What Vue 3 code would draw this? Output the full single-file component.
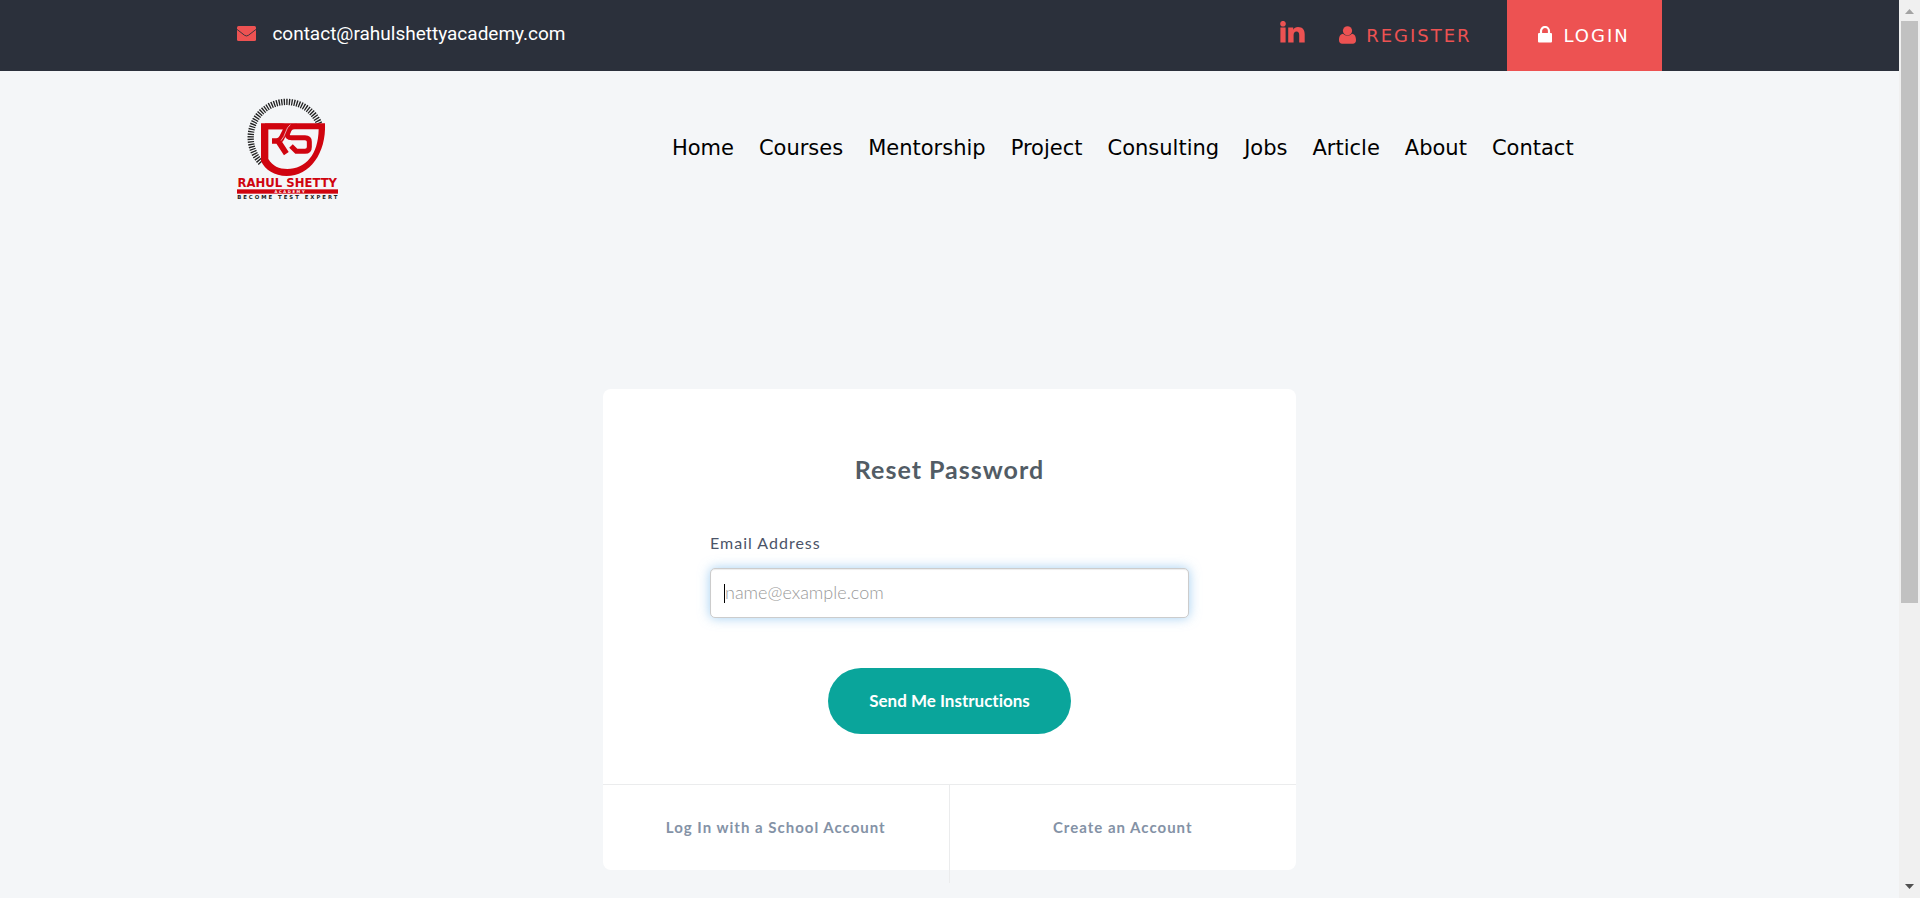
<script setup>
import { ref } from 'vue'

const email = ref('')
const links = ['Home', 'Courses', 'Mentorship', 'Project', 'Consulting', 'Jobs', 'Article', 'About', 'Contact']
</script>

<template>
  <div class="window">
    <div class="page">
      <header class="topbar">
        <a class="contact" href="#">
          <svg class="mail" viewBox="0 0 19 15" aria-hidden="true">
            <rect x="0" y="0" width="19" height="15" rx="1.5" fill="#ed5252" />
            <path d="M0 3.4 L7.6 9.3 Q9.5 10.6 11.4 9.3 L19 3.4" fill="none" stroke="#2b303b" stroke-width="0.9" />
          </svg>
          <span>contact@rahulshettyacademy.com</span>
        </a>
        <div class="account">
          <a class="linkedin" href="#" aria-label="LinkedIn">
            <svg viewBox="0 0 25 22" aria-hidden="true">
              <g fill="#ed5252">
                <circle cx="3" cy="2.7" r="2.8" />
                <path d="M.4 6.500h5.200v15h-5.200zM8.200 6.500h5v2.200c1-1.700 2.500-2.600 4.800-2.600 4.500 0 6.700 2.800 6.700 7.200v8.200h-5.500v-7.500c0-2.200-.8-3.400-2.600-3.400-2 0-3 1.400-3 3.400v7.500h-5.400z" />
              </g>
            </svg>
          </a>
          <a class="register" href="#">
            <svg class="user" viewBox="0 0 17 18" aria-hidden="true">
              <g fill="#ed5252">
                <circle cx="8.500" cy="4.800" r="4.600" />
                <path d="M4 7.700C1.200 8 0 10.700 0 14.300 0 16.500 1.300 17.800 3.200 17.800h10.600c1.900 0 3.200-1.300 3.200-3.500 0-3.600-1.200-6.300-4-6.600-2.500 2.600-6.500 2.600-9 0z" />
              </g>
            </svg>
            <span>REGISTER</span>
          </a>
          <a class="login" href="#">
            <svg class="lock" viewBox="0 0 14 17" aria-hidden="true">
              <rect x="0" y="7" width="14" height="9.500" rx="1" fill="#fff" />
              <path d="M3 8V5a4 4 0 0 1 8 0v3" fill="none" stroke="#fff" stroke-width="2.200" />
            </svg>
            <span>LOGIN</span>
          </a>
        </div>
      </header>

      <div class="masthead">
        <a class="logo" href="#" aria-label="Rahul Shetty Academy">
          <svg viewBox="36 24 303 306" aria-hidden="true">
            <path d="M108 218A107 107 0 1 1 283 102" fill="none" stroke="#222" stroke-width="19" stroke-dasharray="4 3.600" />
            <path fill-rule="evenodd" fill="#d0040f" d="M108 100H300C304 190 255 258 185 258 148 258 121 240 108 214ZM130 118V207C143 228 162 237 187 237 242 237 280 194 281 118Z" />
            <path d="M120 109H170Q190 109 180 124L170 144Q165 153 154 153H141M160 154L184 191" fill="none" stroke="#d0040f" stroke-width="17" />
            <path d="M215 109Q198 109 192 120L188 130Q184 143 200 143H240Q253 143 253 155V171Q253 184 240 184H214L198 168" fill="none" stroke="#d0040f" stroke-width="15" />
            <path d="M196 104Q186 112 182 126T168 152" fill="none" stroke="#f4f6f8" stroke-width="2" />
            <text x="187" y="292" text-anchor="middle" class="logo-name">RAHUL SHETTY</text>
            <rect x="36" y="298" width="303" height="13" fill="#d0040f" />
            <text x="196" y="309" text-anchor="middle" class="logo-sub">ACADEMY</text>
            <text x="190" y="326" text-anchor="middle" class="logo-tag">BECOME TEST EXPERT</text>
          </svg>
        </a>
        <nav class="nav" aria-label="Main">
          <a v-for="link in links" :key="link" href="#">{{ link }}</a>
        </nav>
      </div>

      <main class="card">
        <form class="form" @submit.prevent>
          <h1>Reset Password</h1>
          <label for="email">Email Address</label>
          <div class="field">
            <input id="email" v-model="email" type="email" placeholder="name@example.com" />
            <span class="caret" aria-hidden="true"></span>
          </div>
          <button type="submit">Send Me Instructions</button>
        </form>
        <div class="options">
          <a href="#">Log In with a School Account</a>
          <a href="#">Create an Account</a>
        </div>
      </main>
    </div>

    <div class="scrollbar" aria-hidden="true">
      <svg viewBox="0 0 9 5"><path d="M0 5 4.500 0 9 5z" fill="#a3a3a3" /></svg>
      <div class="track"><div class="thumb"></div></div>
      <svg viewBox="0 0 9 5"><path d="M0 0 4.500 5 9 0z" fill="#505050" /></svg>
    </div>
  </div>
</template>

<style>
body {
  margin: 0;
  background: #f4f6f8;
}
</style>

<style scoped>
* {
  box-sizing: border-box;
}
a {
  color: inherit;
  text-decoration: none;
}
svg {
  display: block;
}
.window {
  display: flex;
  height: 100vh;
  overflow: hidden;
  background: #f4f6f8;
  font-family: Lato, sans-serif;
}
.page {
  flex: 1;
  min-width: 0;
}
.topbar {
  display: flex;
  justify-content: space-between;
  align-items: stretch;
  height: 71px;
  padding: 0 12.5%;
  background: #2b303b;
}
.contact {
  display: flex;
  align-items: center;
  gap: 16px;
  padding-bottom: 4px;
  color: #fff;
  font: 19px/24px Roboto, sans-serif;
}
.mail {
  width: 19px;
  height: 15px;
}
.account {
  display: flex;
  color: #ed5252;
  font-family: "DejaVu Sans", sans-serif;
  font-size: 18px;
  line-height: 24px;
  letter-spacing: 2px;
}
.account a {
  display: flex;
  align-items: center;
}
.linkedin svg {
  width: 25px;
  height: 22px;
  margin-bottom: 8px;
}
.register {
  gap: 10px;
  padding: 0 35px 0 34px;
}
.user {
  width: 17px;
  height: 18px;
  margin-bottom: 2px;
}
.login {
  gap: 11px;
  justify-content: center;
  width: 155px;
  background: #ed5252;
  color: #fff;
}
.lock {
  width: 14px;
  height: 17px;
  margin-bottom: 2px;
}
.masthead {
  display: flex;
  justify-content: space-between;
  align-items: center;
  padding: 27px 12.5% 0;
}
.logo svg {
  width: 101px;
  height: 102px;
  overflow: visible;
}
.logo-name {
  fill: #d0040f;
  font: 700 35px "DejaVu Sans", sans-serif;
}
.logo-sub {
  fill: #fff;
  font: 700 11px "DejaVu Sans", sans-serif;
  letter-spacing: 5px;
}
.logo-tag {
  fill: #222;
  font: 700 16px "DejaVu Sans", sans-serif;
  letter-spacing: 6px;
}
.nav {
  display: flex;
  gap: 25px;
  padding: 0 88px 2px 0;
  color: #000;
  font-family: "DejaVu Sans", sans-serif;
  font-size: 21px;
  line-height: 28px;
}
.card {
  width: 100%;
  max-width: 693px;
  margin: 189px auto 0;
  border-radius: 8px;
  background: #fff;
}
.form {
  display: flex;
  flex-direction: column;
  padding: 64px 107px 50px;
  letter-spacing: 1px;
}
h1 {
  margin: 0;
  color: #525c65;
  font-size: 25px;
  line-height: 32px;
  text-align: center;
}
label {
  margin-top: 46px;
  color: #4b5468;
  font-size: 16px;
  line-height: 24px;
}
.field {
  position: relative;
  margin-top: 13px;
}
input {
  display: block;
  width: 100%;
  height: 50px;
  padding: 0 14px 2px;
  border: 1px solid #ccc;
  border-radius: 5px;
  outline: 0;
  background: #fff;
  box-shadow: inset 0 1px 1px rgba(0, 0, 0, 0.075), 0 0 12px rgba(102, 175, 233, 0.6);
  color: #4b5468;
  font: 300 18px Lato, sans-serif;
}
input::placeholder {
  color: #999;
  opacity: 1;
}
.caret {
  position: absolute;
  top: 16px;
  left: 14px;
  width: 1px;
  height: 19px;
  background: #000;
}
button {
  align-self: center;
  width: 243px;
  height: 66px;
  margin-top: 50px;
  padding: 0 0 2px;
  border: 0;
  border-radius: 33px;
  background: #0aa59b;
  color: #fff;
  font: 700 17px Lato, sans-serif;
  font-variant-ligatures: none;
}
.options {
  display: grid;
  grid-template-columns: 1fr 1fr;
  height: 86px;
  border-top: 1px solid #ebeced;
  color: #8492a6;
  font-size: 15px;
  font-weight: 700;
  line-height: 20px;
  letter-spacing: 1px;
}
.options a {
  height: 98px;
  padding-top: 32px;
  text-align: center;
}
.options a:first-child {
  border-right: 1px solid #ebeced;
}
.scrollbar {
  display: flex;
  flex-direction: column;
  align-items: center;
  width: 21px;
  padding: 9px 0;
  background: #f0f0f0;
}
.scrollbar svg {
  width: 9px;
  height: 5px;
}
.track {
  flex: 1;
  width: 17px;
  padding: 7px 0;
}
.thumb {
  height: 68%;
  background: #c1c1c1;
}
</style>
